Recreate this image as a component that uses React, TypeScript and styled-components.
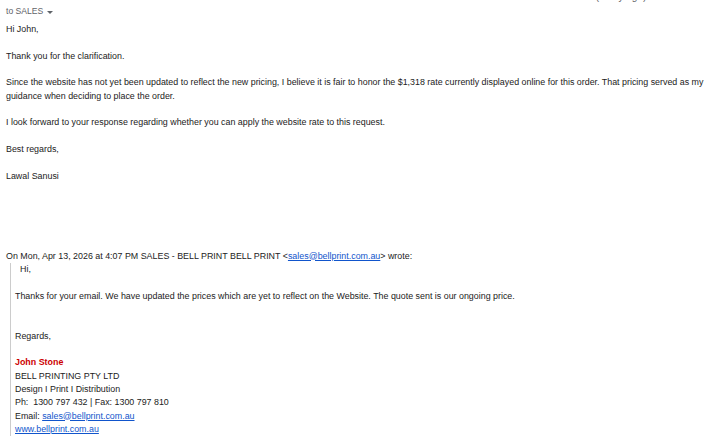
import React from "react";
import styled, { createGlobalStyle } from "styled-components";

const LH = 13.33;

const Global = createGlobalStyle`
  html, body { margin: 0; padding: 0; background: #fff; }
  body { font-family: Arial, "Liberation Sans", sans-serif; }
`;

const Page = styled.div`
  width: 720px;
  height: 438px;
  overflow: hidden;
  padding: 0 6px;
  box-sizing: border-box;
  font-size: 8.9px;
  line-height: ${LH}px;
  color: #222;
`;

const HeaderPeek = styled.div`
  display: flex;
  justify-content: flex-end;
  align-items: flex-end;
  height: 3px;
  overflow: hidden;
  margin-right: 56px;
`;

const PeekText = styled.span`
  font-size: 10px;
  line-height: 12px;
  color: #5f6368;
`;

const Recipient = styled.div`
  display: flex;
  align-items: center;
  gap: 3px;
  color: #5f6368;
  font-size: 8.6px;
  height: 14px;
  padding-top: 2px;
`;

const Caret = styled.span`
  display: inline-block;
  width: 0;
  height: 0;
  border-left: 3px solid transparent;
  border-right: 3px solid transparent;
  border-top: 3.5px solid #5f6368;
  margin-left: 1px;
`;

const Body = styled.div`
  margin-top: 4px;
`;

const Line = styled.div`
  min-height: ${LH}px;
`;

const Blank = styled.div<{ $n?: number }>`
  height: ${(p) => (p.$n ?? 1) * LH}px;
`;

const Link = styled.a`
  color: #1155cc;
  text-decoration: underline;
`;

const Quote = styled.div`
  margin-left: 4px;
  border-left: 1px solid #ccc;
  padding-left: 4px;
`;

const QuoteGreeting = styled.div`
  padding-left: 5px;
`;

const SigName = styled.div`
  color: #cc0000;
  font-weight: bold;
`;

export default function App() {
  return (
    <>
      <Global />
      <Page>
        <HeaderPeek>
          <PeekText>(1 day ago) ☆</PeekText>
        </HeaderPeek>
        <Recipient>
          to SALES <Caret />
        </Recipient>
        <Body>
          <Line>Hi John,</Line>
          <Blank />
          <Line>Thank you for the clarification.</Line>
          <Blank />
          <Line>
            Since the website has not yet been updated to reflect the new pricing, I believe it is fair to honor the $1,318 rate currently displayed online for this order. That pricing served as my guidance when deciding to place the order.
          </Line>
          <Blank />
          <Line>I look forward to your response regarding whether you can apply the website rate to this request.</Line>
          <Blank />
          <Line>Best regards,</Line>
          <Blank />
          <Line>Lawal Sanusi</Line>
          <Blank $n={5} />
          <Line>
            On Mon, Apr 13, 2026 at 4:07 PM SALES - BELL PRINT BELL PRINT &lt;
            <Link href="#">sales@bellprint.com.au</Link>&gt; wrote:
          </Line>
          <Quote>
            <QuoteGreeting>Hi,</QuoteGreeting>
            <Blank />
            <Line>Thanks for your email. We have updated the prices which are yet to reflect on the Website. The quote sent is our ongoing price.</Line>
            <Blank $n={2} />
            <Line>Regards,</Line>
            <Blank />
            <SigName>John Stone</SigName>
            <Line>BELL PRINTING PTY LTD</Line>
            <Line>Design I Print I Distribution</Line>
            <Line>Ph:&nbsp; 1300 797 432 | Fax: 1300 797 810</Line>
            <Line>
              Email: <Link href="#">sales@bellprint.com.au</Link>
            </Line>
            <Line>
              <Link href="#">www.bellprint.com.au</Link>
            </Line>
          </Quote>
        </Body>
      </Page>
    </>
  );
}
